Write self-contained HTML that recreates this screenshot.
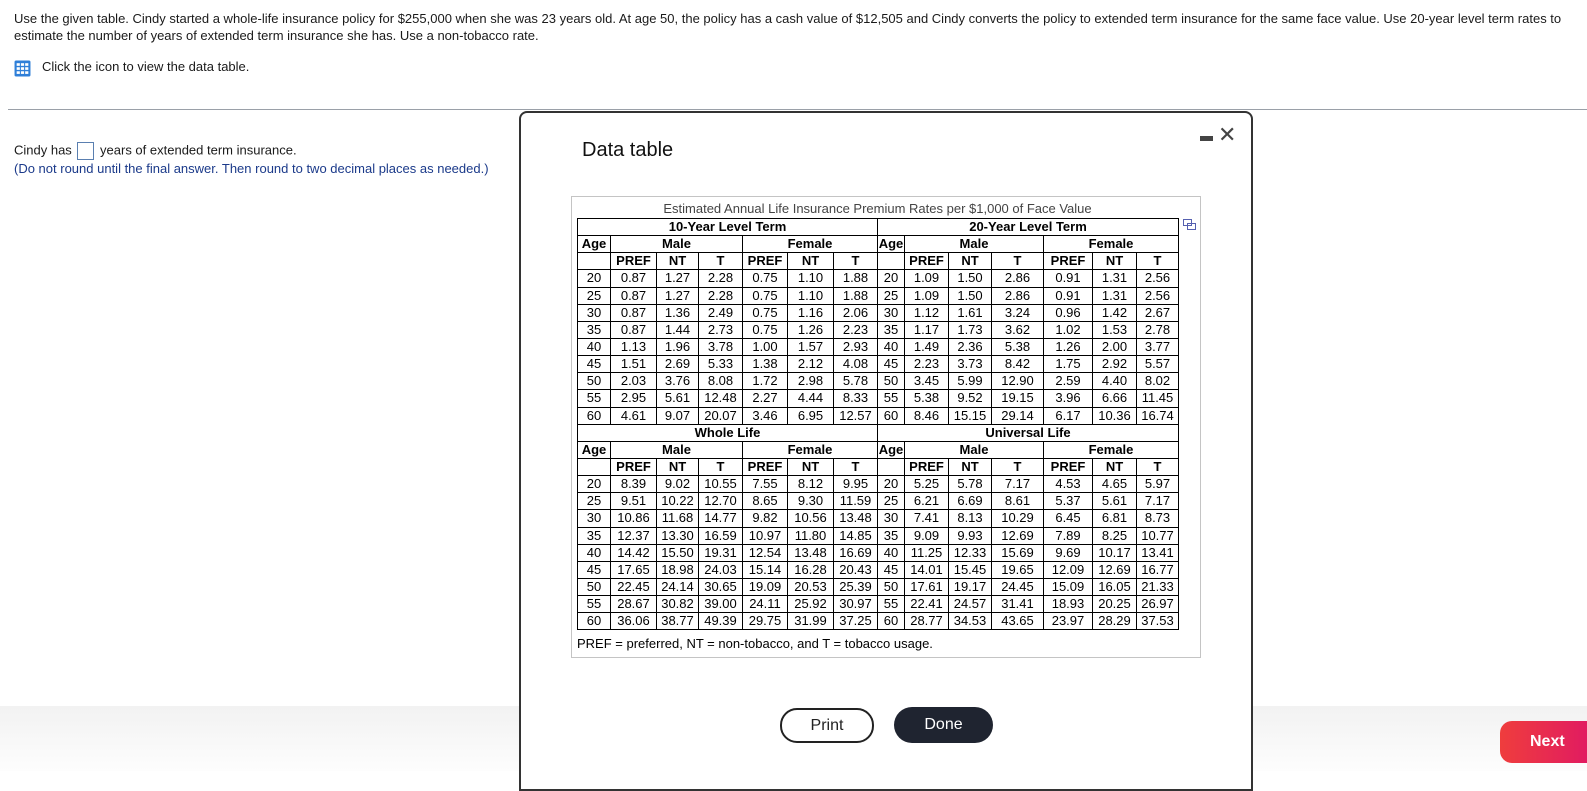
<!DOCTYPE html>
<html><head><meta charset="utf-8"><style>
*{margin:0;padding:0;box-sizing:border-box}
body{width:1587px;height:771px;overflow:hidden;background:#fff;font-family:"Liberation Sans",Arial,sans-serif;color:#222;position:relative}
.abs{position:absolute}
.q{left:14px;top:10px;font-size:13px;line-height:17px;width:1570px;color:#1a1a1a;white-space:nowrap}
.band{left:0;top:706px;width:1587px;height:65px;background:linear-gradient(#f2f2f2,#fdfdfd)}
.modal{left:519px;top:111px;width:734px;height:680px;border:2px solid #333;border-radius:8px 8px 0 0;background:#fff}
table{border-collapse:collapse;table-layout:fixed;font-size:13px;color:#000}
td{border:1.5px solid #000;text-align:center;height:17.15px;padding:0;line-height:14px;white-space:nowrap;overflow:hidden}
td.h{font-weight:bold}
</style></head><body>
<div class="abs q">Use the given table. Cindy started a whole-life insurance policy for $255,000 when she was 23 years old. At age 50, the policy has a cash value of $12,505 and Cindy converts the policy to extended term insurance for the same face value. Use 20-year level term rates to<br>estimate the number of years of extended term insurance she has. Use a non-tobacco rate.</div>
<svg class="abs" style="left:14px;top:60px" width="17" height="17" viewBox="0 0 16 16"><rect x="0.5" y="0.5" width="15" height="15" rx="1.5" fill="#2f7fd8"/><g fill="#fff"><rect x="2.5" y="3" width="3" height="2.5"/><rect x="6.5" y="3" width="3" height="2.5"/><rect x="10.5" y="3" width="3" height="2.5"/><rect x="2.5" y="6.8" width="3" height="2.5"/><rect x="6.5" y="6.8" width="3" height="2.5"/><rect x="10.5" y="6.8" width="3" height="2.5"/><rect x="2.5" y="10.6" width="3" height="2.5"/><rect x="6.5" y="10.6" width="3" height="2.5"/><rect x="10.5" y="10.6" width="3" height="2.5"/></g></svg>
<div class="abs" style="left:42px;top:59px;font-size:13px;color:#1a1a1a">Click the icon to view the data table.</div>
<div class="abs" style="left:8px;top:109px;width:1579px;height:1px;background:#9aa0a8"></div>
<div class="abs" style="left:14px;top:142px;font-size:13px;color:#1a1a1a">Cindy has <span style="display:inline-block;width:17px;height:18px;border:1px solid #5a7fb0;vertical-align:middle;margin:0 2px"></span> years of extended term insurance.</div>
<div class="abs" style="left:14px;top:161px;font-size:13px;color:#1b3a8a">(Do not round until the final answer. Then round to two decimal places as needed.)</div>
<div class="abs band"></div>
<div class="abs modal"></div>
<div class="abs" style="left:582px;top:139px;font-size:20px;color:#111">Data table</div>
<div class="abs" style="left:1200px;top:136px;width:13px;height:5px;background:#444"></div>
<div class="abs" style="left:1218px;top:122px;font-size:22px;color:#444;line-height:26px">✕</div>
<div class="abs" style="left:571px;top:196px;width:630px;height:462px;border:1px solid #c4c4c4"></div>
<div class="abs" style="left:577px;top:201px;width:601px;text-align:center;font-size:13px;color:#444">Estimated Annual Life Insurance Premium Rates per $1,000 of Face Value</div>
<svg class="abs" style="left:1183px;top:219px" width="13" height="12" viewBox="0 0 13 12"><rect x="0.5" y="0.5" width="8" height="6" fill="#fff" stroke="#5560b0"/><rect x="4.5" y="4.5" width="8" height="6" fill="none" stroke="#5560b0"/></svg>
<table class="abs" style="left:577px;top:218px;width:601px">
<colgroup><col style="width:33px"><col style="width:46px"><col style="width:42px"><col style="width:44px"><col style="width:45px"><col style="width:46px"><col style="width:44px"><col style="width:27px"><col style="width:44px"><col style="width:43px"><col style="width:52px"><col style="width:49px"><col style="width:44px"><col style="width:42px"></colgroup>
<tr><td class="h" colspan="7">10-Year Level Term</td><td class="h" colspan="7">20-Year Level Term</td></tr>
<tr><td class="h">Age</td><td class="h" colspan="3">Male</td><td class="h" colspan="3">Female</td><td class="h">Age</td><td class="h" colspan="3">Male</td><td class="h" colspan="3">Female</td></tr>
<tr><td></td><td class="h">PREF</td><td class="h">NT</td><td class="h">T</td><td class="h">PREF</td><td class="h">NT</td><td class="h">T</td><td></td><td class="h">PREF</td><td class="h">NT</td><td class="h">T</td><td class="h">PREF</td><td class="h">NT</td><td class="h">T</td></tr>
<tr><td>20</td><td>0.87</td><td>1.27</td><td>2.28</td><td>0.75</td><td>1.10</td><td>1.88</td><td>20</td><td>1.09</td><td>1.50</td><td>2.86</td><td>0.91</td><td>1.31</td><td>2.56</td></tr>
<tr><td>25</td><td>0.87</td><td>1.27</td><td>2.28</td><td>0.75</td><td>1.10</td><td>1.88</td><td>25</td><td>1.09</td><td>1.50</td><td>2.86</td><td>0.91</td><td>1.31</td><td>2.56</td></tr>
<tr><td>30</td><td>0.87</td><td>1.36</td><td>2.49</td><td>0.75</td><td>1.16</td><td>2.06</td><td>30</td><td>1.12</td><td>1.61</td><td>3.24</td><td>0.96</td><td>1.42</td><td>2.67</td></tr>
<tr><td>35</td><td>0.87</td><td>1.44</td><td>2.73</td><td>0.75</td><td>1.26</td><td>2.23</td><td>35</td><td>1.17</td><td>1.73</td><td>3.62</td><td>1.02</td><td>1.53</td><td>2.78</td></tr>
<tr><td>40</td><td>1.13</td><td>1.96</td><td>3.78</td><td>1.00</td><td>1.57</td><td>2.93</td><td>40</td><td>1.49</td><td>2.36</td><td>5.38</td><td>1.26</td><td>2.00</td><td>3.77</td></tr>
<tr><td>45</td><td>1.51</td><td>2.69</td><td>5.33</td><td>1.38</td><td>2.12</td><td>4.08</td><td>45</td><td>2.23</td><td>3.73</td><td>8.42</td><td>1.75</td><td>2.92</td><td>5.57</td></tr>
<tr><td>50</td><td>2.03</td><td>3.76</td><td>8.08</td><td>1.72</td><td>2.98</td><td>5.78</td><td>50</td><td>3.45</td><td>5.99</td><td>12.90</td><td>2.59</td><td>4.40</td><td>8.02</td></tr>
<tr><td>55</td><td>2.95</td><td>5.61</td><td>12.48</td><td>2.27</td><td>4.44</td><td>8.33</td><td>55</td><td>5.38</td><td>9.52</td><td>19.15</td><td>3.96</td><td>6.66</td><td>11.45</td></tr>
<tr><td>60</td><td>4.61</td><td>9.07</td><td>20.07</td><td>3.46</td><td>6.95</td><td>12.57</td><td>60</td><td>8.46</td><td>15.15</td><td>29.14</td><td>6.17</td><td>10.36</td><td>16.74</td></tr>
<tr><td class="h" colspan="7">Whole Life</td><td class="h" colspan="7">Universal Life</td></tr>
<tr><td class="h">Age</td><td class="h" colspan="3">Male</td><td class="h" colspan="3">Female</td><td class="h">Age</td><td class="h" colspan="3">Male</td><td class="h" colspan="3">Female</td></tr>
<tr><td></td><td class="h">PREF</td><td class="h">NT</td><td class="h">T</td><td class="h">PREF</td><td class="h">NT</td><td class="h">T</td><td></td><td class="h">PREF</td><td class="h">NT</td><td class="h">T</td><td class="h">PREF</td><td class="h">NT</td><td class="h">T</td></tr>
<tr><td>20</td><td>8.39</td><td>9.02</td><td>10.55</td><td>7.55</td><td>8.12</td><td>9.95</td><td>20</td><td>5.25</td><td>5.78</td><td>7.17</td><td>4.53</td><td>4.65</td><td>5.97</td></tr>
<tr><td>25</td><td>9.51</td><td>10.22</td><td>12.70</td><td>8.65</td><td>9.30</td><td>11.59</td><td>25</td><td>6.21</td><td>6.69</td><td>8.61</td><td>5.37</td><td>5.61</td><td>7.17</td></tr>
<tr><td>30</td><td>10.86</td><td>11.68</td><td>14.77</td><td>9.82</td><td>10.56</td><td>13.48</td><td>30</td><td>7.41</td><td>8.13</td><td>10.29</td><td>6.45</td><td>6.81</td><td>8.73</td></tr>
<tr><td>35</td><td>12.37</td><td>13.30</td><td>16.59</td><td>10.97</td><td>11.80</td><td>14.85</td><td>35</td><td>9.09</td><td>9.93</td><td>12.69</td><td>7.89</td><td>8.25</td><td>10.77</td></tr>
<tr><td>40</td><td>14.42</td><td>15.50</td><td>19.31</td><td>12.54</td><td>13.48</td><td>16.69</td><td>40</td><td>11.25</td><td>12.33</td><td>15.69</td><td>9.69</td><td>10.17</td><td>13.41</td></tr>
<tr><td>45</td><td>17.65</td><td>18.98</td><td>24.03</td><td>15.14</td><td>16.28</td><td>20.43</td><td>45</td><td>14.01</td><td>15.45</td><td>19.65</td><td>12.09</td><td>12.69</td><td>16.77</td></tr>
<tr><td>50</td><td>22.45</td><td>24.14</td><td>30.65</td><td>19.09</td><td>20.53</td><td>25.39</td><td>50</td><td>17.61</td><td>19.17</td><td>24.45</td><td>15.09</td><td>16.05</td><td>21.33</td></tr>
<tr><td>55</td><td>28.67</td><td>30.82</td><td>39.00</td><td>24.11</td><td>25.92</td><td>30.97</td><td>55</td><td>22.41</td><td>24.57</td><td>31.41</td><td>18.93</td><td>20.25</td><td>26.97</td></tr>
<tr><td>60</td><td>36.06</td><td>38.77</td><td>49.39</td><td>29.75</td><td>31.99</td><td>37.25</td><td>60</td><td>28.77</td><td>34.53</td><td>43.65</td><td>23.97</td><td>28.29</td><td>37.53</td></tr>
</table>
<div class="abs" style="left:577px;top:636px;font-size:13px;color:#000">PREF = preferred, NT = non-tobacco, and T = tobacco usage.</div>
<div class="abs" style="left:780px;top:708px;width:94px;height:35px;border:2px solid #222;border-radius:17px;text-align:center;line-height:31px;font-size:16px;color:#222;background:#fff">Print</div>
<div class="abs" style="left:894px;top:707px;width:99px;height:36px;border-radius:18px;background:#1f2430;text-align:center;line-height:36px;font-size:16px;color:#fff">Done</div>
<div class="abs" style="left:1500px;top:721px;width:120px;height:42px;border-radius:12px;background:linear-gradient(90deg,#ef3d3d,#dc0f6e);color:#fff;font-weight:bold;font-size:16px;line-height:42px;padding-left:30px">Next</div>
</body></html>
